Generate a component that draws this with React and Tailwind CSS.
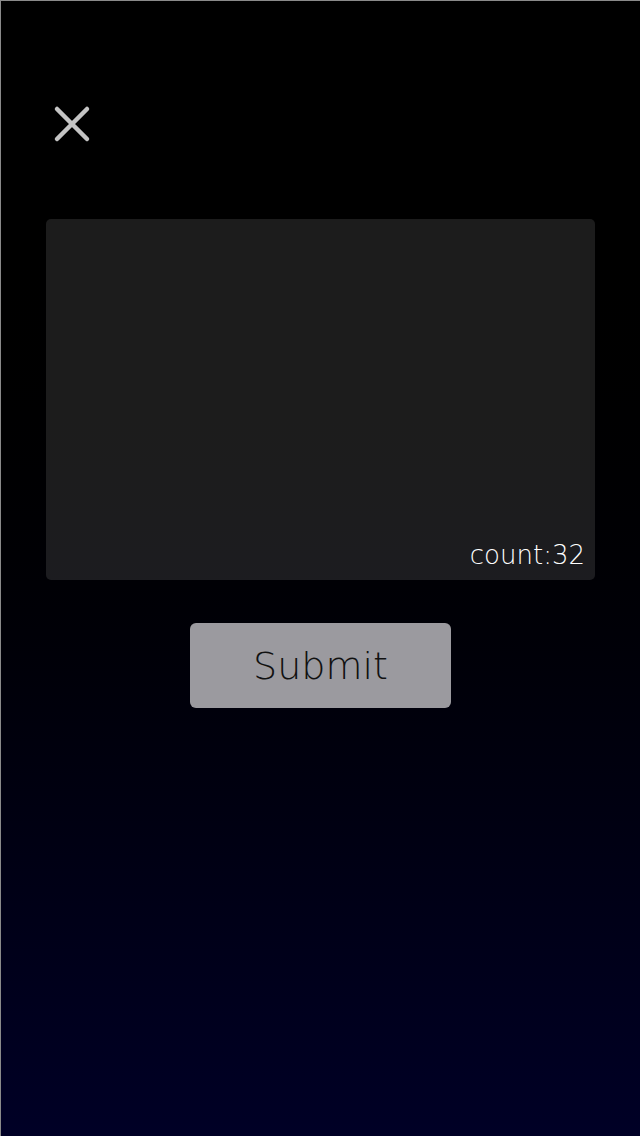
export default function App() {
  return (
    <div className="h-[1136px] w-[640px] border-l border-t border-[#8a8a8a] bg-gradient-to-b from-black from-[15%] to-[#000026] font-['DejaVu_Sans',sans-serif]">
      <div className="pl-[52px] pt-[104px]">
        <svg width="38" height="38" viewBox="0 0 38 38" fill="none" stroke="#c4c4c4" strokeWidth="4.5" strokeLinecap="round">
          <path d="M4 4 L34 34 M34 4 L4 34" />
        </svg>
      </div>
      <div className="mx-[45px] mt-[76px] flex h-[361px] items-end justify-end rounded-[5px] bg-white/[0.11] pr-[10px] pb-[12px]">
        <span className="text-[26px] font-extralight leading-none text-white">count:32</span>
      </div>
      <div className="mt-[43px] flex justify-center">
        <button className="h-[85px] w-[261px] rounded-[6px] bg-[#9b9a9f] text-[38px] font-extralight leading-none text-[#111]">
          Submit
        </button>
      </div>
    </div>
  );
}
